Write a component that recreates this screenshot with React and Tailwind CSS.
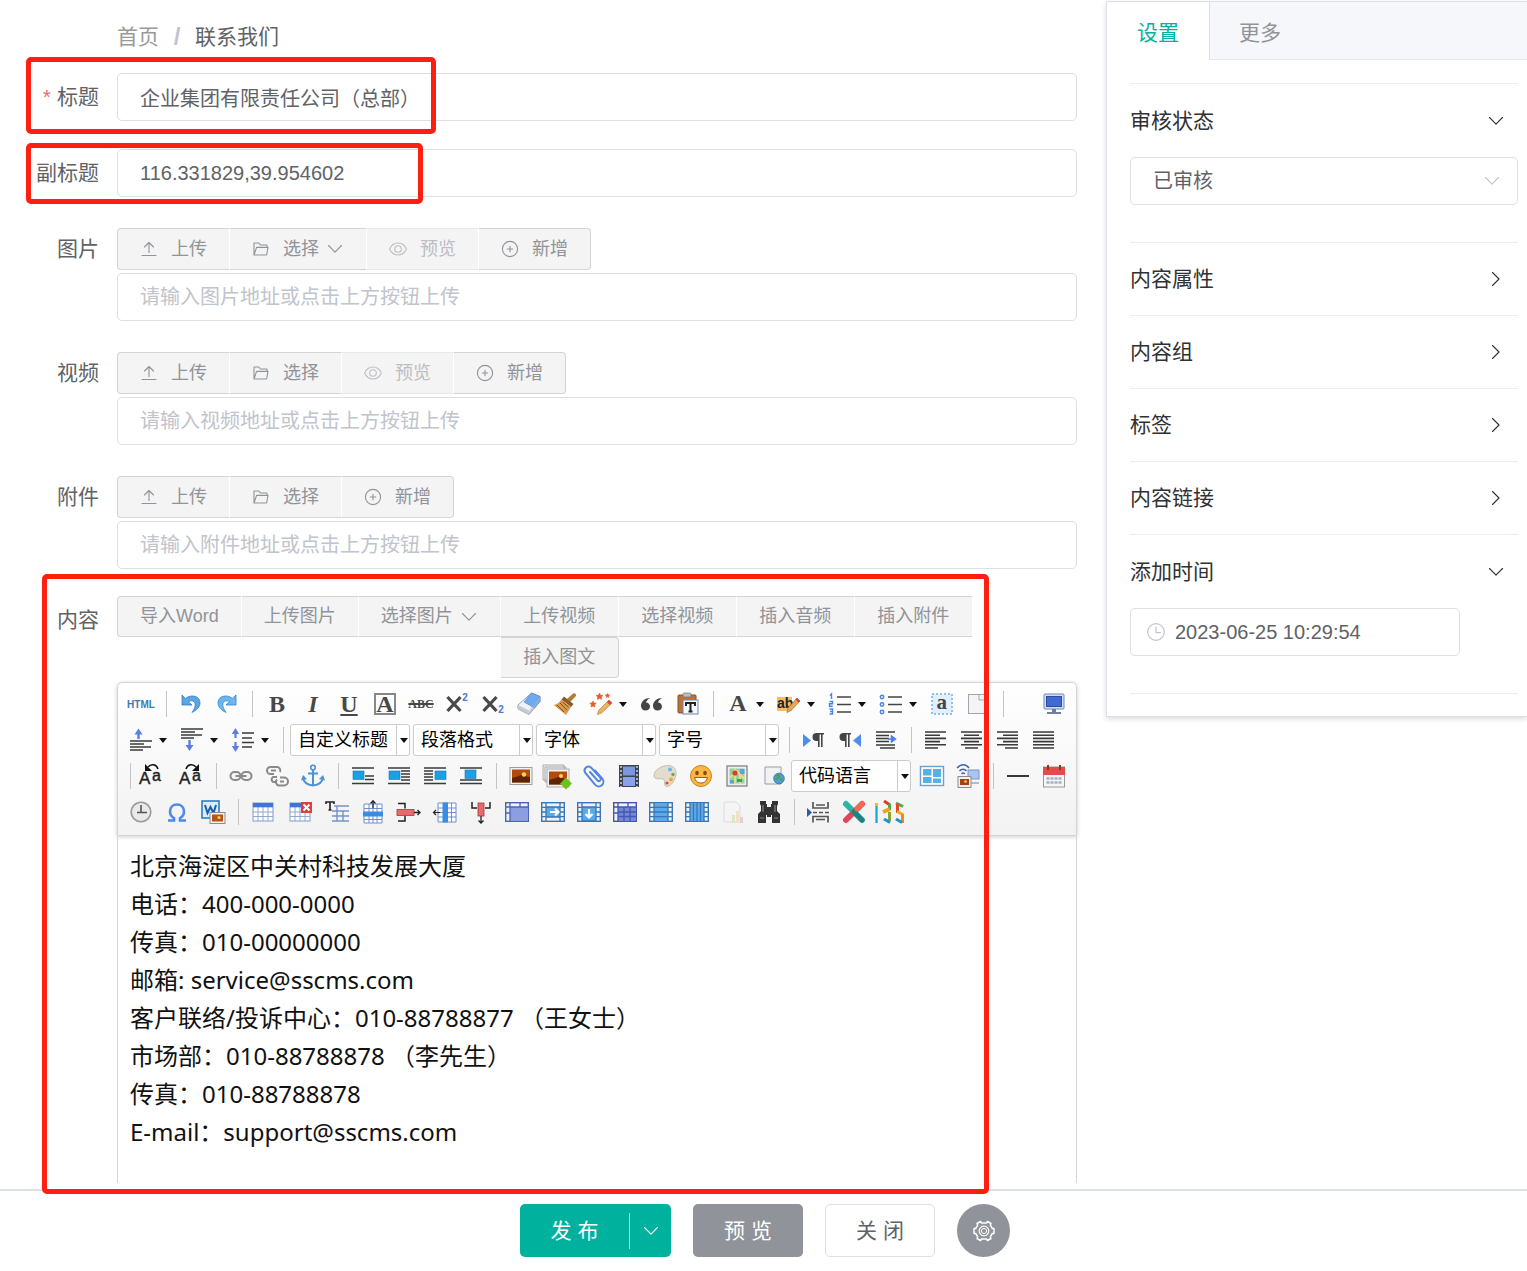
import { useState } from "react";

/* ---------- line icons used by the form ---------- */

function LineIcon({ children, className = "size-[18px]" }) {
  return (
    <svg
      viewBox="0 0 18 18"
      className={`shrink-0 ${className}`}
      fill="none"
      stroke="currentColor"
      strokeWidth="1.1"
      strokeLinecap="round"
      strokeLinejoin="round"
      aria-hidden="true"
    >
      {children}
    </svg>
  );
}

const UploadIcon = () => (
  <LineIcon>
    <path d="M9 12.500V2.500M4.500 7 9 2.500 13.500 7M2 15.500h14" />
  </LineIcon>
);

const FolderIcon = () => (
  <LineIcon>
    <path d="M2 15V3h4.800l1.600 2h6.600v2.400M2 15h12.600L16 7.400H4.600L2 15Z" />
  </LineIcon>
);

const EyeIcon = () => (
  <LineIcon>
    <path d="M.6 9C2.400 5 5.400 3 9 3s6.600 2 8.400 6c-1.800 4-4.800 6-8.400 6S2.400 13 .6 9Z" />
    <circle cx="9" cy="9" r="3.300" />
  </LineIcon>
);

const PlusIcon = () => (
  <LineIcon>
    <circle cx="9" cy="9" r="7.6" />
    <path d="M9 6.3v5.4M6.3 9h5.4" />
  </LineIcon>
);

const ChevronDown = ({ className }) => (
  <LineIcon className={className}>
    <path d="m2.5 5.5 6.5 6.700 6.500-6.700" />
  </LineIcon>
);

const ChevronRight = ({ className }) => (
  <LineIcon className={className}>
    <path d="m5.500 2.500 6.500 6.500-6.500 6.500" />
  </LineIcon>
);

const ClockLineIcon = () => (
  <LineIcon className="size-5">
    <circle cx="9" cy="9" r="7.5" />
    <path d="M9 4.5V9.5h4" />
  </LineIcon>
);

const GearIcon = () => (
  <svg viewBox="0 0 22 22" className="size-[22px]" fill="none" stroke="currentColor" strokeWidth="1.5" strokeLinejoin="round" aria-hidden="true">
    <path d="M7.500 1.500 8.500 3h5l1-1.500 3.500 2-.7 1.700 2 3.300H21v5h-1.700l-2 3.300.7 1.700-3.500 2-1-1.500h-5l-1 1.500-3.500-2 .7-1.700-2-3.300H1v-5h1.700l2-3.300L4 3.500Z" />
    <circle cx="11" cy="11" r="4.800" strokeWidth="1.2" />
    <circle cx="11" cy="11" r="2.600" strokeWidth="1" />
  </svg>
);

/* ---------- editor toolbar icons ---------- */

function Ico({ children }) {
  return (
    <svg viewBox="0 0 24 24" className="size-6 shrink-0 overflow-visible" fill="none" aria-hidden="true">
      {children}
    </svg>
  );
}

const Undo = () => (
  <Ico>
    <path d="M3 3v10h10l-3.600-3.200c3-2 6.600-1 6.800 2.600.1 2.600-1 5-3.200 8 5-2.400 8-5.400 8-9.600C21 4.500 13 1.500 6.500 6.400Z" fill="#5aa5e6" stroke="#2f7fc9" strokeWidth=".8" />
  </Ico>
);

const Redo = () => (
  <Ico>
    <path d="M21 3v10H11l3.600-3.200c-3-2-6.600-1-6.800 2.600-.1 2.600 1 5 3.200 8-5-2.400-8-5.400-8-9.600C3 4.500 11 1.500 17.500 6.400Z" fill="#6db6ef" stroke="#2f86cf" strokeWidth=".8" />
  </Ico>
);

const Eraser = () => (
  <Ico>
    <path d="m14.500 1 8.500 3.500v5L12 22.500 1 17v-4Z" fill="#f1f3f6" stroke="#8b95a5" strokeWidth=".9" />
    <path d="m14.500 1 8.500 3.500v5L17.500 16 7 10Z" fill="#6fa9ef" stroke="#4d83cc" strokeWidth=".6" />
    <path d="M1 13v4l11 5.500v-4Z" fill="#c3cad4" />
    <path d="m23 4.500-11 14v4l11-13Z" fill="#9fb3d0" opacity=".5" />
  </Ico>
);

const Broom = () => (
  <Ico>
    <path d="M22 1.500c1.500.8 1.500 2 .5 3L17 10l-3-3 5.500-5c.8-.8 1.700-1 2.500-.5Z" fill="#b97a35" />
    <path d="m11 4.500 9.500 7.500-2.500 3L8.500 7.500Z" fill="#8a5a2a" />
    <path d="m8.500 7.500 9.500 7.500-5 8L.8 13c3-.5 5.700-2.500 7.700-5.500Z" fill="#d79a4c" />
    <path d="m4 13 7 7M7 11l7 7M9.500 10l6 5" stroke="#7d4f22" strokeWidth="1" />
  </Ico>
);

const Wand = () => (
  <Ico>
    <path d="m20 8 3 3-10.500 10-4 1.500 1-4Z" fill="#e9b45c" stroke="#b9812c" strokeWidth=".7" />
    <path d="m20 8 3 3-2 2-3.200-3Z" fill="#dd4747" />
    <path d="m10.500 1 1 2.200 2.500.3-1.800 1.600.4 2.400-2.100-1.200-2.200 1.200.5-2.400L7 3.500l2.500-.3ZM4 9l1 2 2.300.3-1.700 1.500.4 2.200-2-1.100L2 15l.4-2.200L.8 11.300 3 11ZM18.500 1.500l.7 1.300 1.500.2-1.100 1 .2 1.500-1.300-.7-1.300.7.2-1.500-1.100-1 1.500-.2Z" fill="#e85a28" stroke="#e85a28" strokeWidth=".6" />
  </Ico>
);

const Quote = () => (
  <Ico>
    <path d="M10 6c-5 0-9 3.500-9 8 0 2.700 1.900 4.500 4.500 4.500 2.500 0 4.500-1.700 4.500-4.100 0-2.300-1.700-3.900-4-4C6.700 8.500 8 7.200 10 6ZM22 6c-5 0-9 3.500-9 8 0 2.700 1.900 4.500 4.500 4.500 2.500 0 4.500-1.700 4.500-4.100 0-2.300-1.700-3.900-4-4C18.700 8.500 20 7.200 22 6Z" fill="#444" />
  </Ico>
);

const Paste = () => (
  <Ico>
    <rect x="2" y="3" width="18" height="18" rx="1" fill="#bd7238" stroke="#8d4d1d" />
    <rect x="7" y="1" width="8" height="4" rx="1" fill="#b9bcc2" stroke="#777" strokeWidth=".7" />
    <rect x="7" y="8" width="15" height="14" fill="#f4f7fd" stroke="#6f86b8" />
    <path d="M10 14v-3h9v3M14.500 11v8.500M12.500 19.500h4" stroke="#222" strokeWidth="2" />
  </Ico>
);

const Highlight = () => (
  <Ico>
    <rect x="0" y="5" width="15" height="14" fill="#f8bd62" />
    <text x="0" y="16" fontSize="14" fontWeight="700" fill="#222" fontFamily="Liberation Sans, sans-serif">ab</text>
    <path d="m20 6 3 3-9 9.500-4 2 1-4.500Z" fill="#e6aa53" stroke="#9b6a24" strokeWidth=".7" />
    <path d="m20 6 3 3-1.500 1.500-3-3Z" fill="#dd3c3c" />
  </Ico>
);

const OrderedList = () => (
  <Ico>
    <path d="M9 5h14M9 12.500h14M9 20h14" stroke="#444" strokeWidth="1.6" />
    <path d="M2 3.500 3.500 2v5M1.500 9.500h3v2.300h-3v2.500h3.300M1.500 17h3v5h-3M2 19.500h2.500" stroke="#4b83ec" strokeWidth="1.4" />
  </Ico>
);

const BulletList = () => (
  <Ico>
    <path d="M9 5h14M9 12.500h14M9 20h14" stroke="#444" strokeWidth="1.6" />
    <g stroke="#4b83ec" strokeWidth="1.5">
      <circle cx="3" cy="5" r="1.7" />
      <circle cx="3" cy="12.5" r="1.7" />
      <circle cx="3" cy="20" r="1.7" />
    </g>
  </Ico>
);

const SelectAll = () => (
  <Ico>
    <rect x="2" y="2" width="20" height="20" fill="#e2f0fe" stroke="#8ec2f2" strokeWidth="2" strokeDasharray="2 2" />
    <text x="6.5" y="17" fontSize="21" fontWeight="700" fill="#444" fontFamily="Liberation Serif, serif">a</text>
  </Ico>
);

const NewPage = () => (
  <Ico>
    <rect x="2.5" y="2.5" width="19" height="19" fill="#f4f4f8" stroke="#a3a4ad" />
    <path d="M13 3v5h8" stroke="#a3a4ad" />
  </Ico>
);

const Monitor = () => (
  <Ico>
    <rect x="2" y="2" width="20" height="15" rx="1" fill="#d3def4" stroke="#6e88bb" />
    <rect x="4.5" y="4.5" width="15" height="10" fill="#3f6bd0" stroke="#2c4d9c" />
    <path d="M10 17h4v3h-4ZM5 20h14v2H5Z" fill="#6c7f9e" />
  </Ico>
);

const TextLines = ({ rows }) => (
  <path d={rows.map(([x, y, w]) => `M${x} ${y}h${w}`).join("")} stroke="#3a3a3a" strokeWidth="1.6" />
);

const SpaceBefore = () => (
  <Ico>
    <path d="M9.500 11V5" stroke="#5b7fe0" strokeWidth="2.4" />
    <path d="M5.500 6.500 9.500.5l4 6Z" fill="#5b7fe0" />
    <TextLines rows={[[1, 13, 22], [1, 16, 14], [1, 19, 21], [1, 22, 13]]} />
  </Ico>
);

const SpaceAfter = () => (
  <Ico>
    <TextLines rows={[[1, 1, 22], [1, 4, 14], [1, 7, 21], [1, 10, 13]]} />
    <path d="M9.500 12v6" stroke="#5b7fe0" strokeWidth="2.4" />
    <path d="m5.500 17 4 6 4-6Z" fill="#5b7fe0" />
  </Ico>
);

const LineHeight = () => (
  <Ico>
    <path d="M4.500 10V5M4.500 14v5" stroke="#5b7fe0" strokeWidth="2.2" />
    <path d="m.8 6 3.700-6 3.700 6ZM.8 18l3.700 6 3.700-6Z" fill="#5b7fe0" />
    <TextLines rows={[[11, 5, 12], [11, 10, 10], [11, 14.5, 12], [11, 19, 10]]} />
  </Ico>
);

const Ltr = () => (
  <Ico>
    <path d="m1 6 8 6.500L1 19Z" fill="#4c8df0" />
    <path d="M22 5h-7.500a4 4 0 0 0 0 8H16v6h1.600V6.500H19V19h1.600V6.500H22Z" fill="#444" />
  </Ico>
);

const Rtl = () => (
  <Ico>
    <path d="m23 6-8 6.500 8 6.500Z" fill="#4c8df0" />
    <path d="M13 5H5.500a4 4 0 0 0 0 8H7v6h1.600V6.500H10V19h1.600V6.500H13Z" fill="#444" />
  </Ico>
);

const Indent = () => (
  <Ico>
    <TextLines rows={[[2, 4, 19], [2, 7.5, 13], [2, 10.5, 13], [2, 13.5, 13], [2, 17, 19], [6, 20, 15]]} />
    <path d="M14 11h5M17.500 8l4 3-4 3Z" stroke="#4c7ff0" strokeWidth="1.5" fill="#4c7ff0" />
  </Ico>
);

const ALIGN_ROWS = {
  left: [[1, 4, 21], [1, 7.2, 15], [1, 10.4, 21], [1, 13.6, 15], [1, 16.8, 21], [1, 20, 13]],
  center: [[1, 4, 21], [4, 7.2, 15], [1, 10.4, 21], [4, 13.6, 15], [1, 16.8, 21], [5, 20, 13]],
  right: [[1, 4, 21], [7, 7.2, 15], [1, 10.4, 21], [7, 13.6, 15], [1, 16.8, 21], [9, 20, 13]],
  full: [[1, 4, 21], [1, 7.2, 21], [1, 10.4, 21], [1, 13.6, 21], [1, 16.8, 21], [1, 20, 21]],
};

const Align = ({ to }) => (
  <Ico>
    <TextLines rows={ALIGN_ROWS[to]} />
  </Ico>
);

const CaseLetters = () => (
  <g fontFamily="Liberation Sans, sans-serif" fill="#222" stroke="#222" strokeWidth=".4">
    <text x="0" y="20" fontSize="17">A</text>
    <text x="13" y="17" fontSize="16">a</text>
  </g>
);

const CaseUp = () => (
  <Ico>
    <CaseLetters />
    <path d="M19 5c-1.500-5-7-5.500-10-2" stroke="#111" strokeWidth="1.5" />
    <path d="M6 0v7h7Z" fill="#111" />
  </Ico>
);

const CaseDown = () => (
  <Ico>
    <CaseLetters />
    <path d="M7 5c1.500-5 7-5.500 10-2" stroke="#111" strokeWidth="1.5" />
    <path d="M20 0v7h-7Z" fill="#111" />
  </Ico>
);

const Link = () => (
  <Ico>
    <g stroke="#8a8a8a" strokeWidth="2">
      <rect x="1.5" y="8" width="10" height="8" rx="4" />
      <rect x="12.5" y="8" width="10" height="8" rx="4" />
      <path d="M6.500 12h11" />
    </g>
  </Ico>
);

const Unlink = () => (
  <Ico>
    <g stroke="#8a8a8a" strokeWidth="2">
      <path d="M9 10H5.500a3.500 3.500 0 0 1 0-7H12a3.500 3.500 0 0 1 3 5M6 6.500h5M12 13H8a3 3 0 0 0 0 5h3" />
      <path d="M15 13.500h4a3.500 3.500 0 0 1 0 8h-5a3.500 3.500 0 0 1-2-6M15 17.500h4" />
    </g>
  </Ico>
);

const Anchor = () => (
  <Ico>
    <circle cx="12" cy="3.5" r="2.3" stroke="#4a93d6" strokeWidth="1.6" />
    <path d="M12 6v16M7 9.500h10M2 13c.5 5 4 8 10 8.500 6-.5 9.500-3.500 10-8.500" stroke="#4a93d6" strokeWidth="2" />
    <path d="M0 16.500 2 11l4 4ZM24 16.500 22 11l-4 4Z" fill="#4a93d6" />
  </Ico>
);

// blue picture box with text flowing around it
const FLOAT_SHAPES = {
  none: { box: [2, 7], rows: [[1, 4, 22], [14, 12, 9], [14, 15.5, 9], [1, 19.5, 22]] },
  left: { box: [2, 7], rows: [[1, 4, 22], [14, 7, 9], [14, 10, 9], [14, 13, 9], [14, 16, 9], [1, 19.5, 22]] },
  right: { box: [12, 7], rows: [[1, 4, 22], [1, 7, 9], [1, 10, 9], [1, 13, 9], [1, 16, 9], [1, 19.5, 22]] },
  center: { box: [6, 6], rows: [[1, 4, 22], [1, 16, 22], [1, 19.5, 22]] },
};

const ImageFloat = ({ to }) => {
  const { box, rows } = FLOAT_SHAPES[to];
  return (
    <Ico>
      <TextLines rows={rows} />
      <rect x={box[0]} y={box[1]} width="11" height="8.5" fill="#1c9fe4" stroke="#0f7cc0" strokeWidth=".6" />
    </Ico>
  );
};

const Photo = () => (
  <Ico>
    <rect x="1" y="3.5" width="22" height="17" fill="#f2f2f2" stroke="#9c9c9c" />
    <rect x="3" y="5.5" width="18" height="13" fill="#b44a0c" />
    <path d="M3 14c5-1 8-3 10-3s5 2 8 2v5.500H3Z" fill="#5e2404" />
    <circle cx="15" cy="10.5" r="2.2" fill="#ffd35a" />
  </Ico>
);

const Photos = () => (
  <Ico>
    <path d="M-2 1h21v15H-2ZM0 3h21v15H0Z" fill="#eee" stroke="#999" strokeWidth=".8" />
    <rect x="2" y="5" width="22" height="18" fill="#f2f2f2" stroke="#9c9c9c" strokeWidth=".8" />
    <rect x="4" y="7.5" width="18" height="13" fill="#b44a0c" />
    <path d="M4 16c5-1 8-3 10-3s5 2 8 2v5.500H4Z" fill="#5e2404" />
    <circle cx="16" cy="12" r="2" fill="#ffd35a" />
    <path d="m21 15 4.500 4.500L21 24l-4.500-4.500Z" fill="#6cc21b" stroke="#6cc21b" strokeWidth="2" />
  </Ico>
);

const Clip = () => (
  <Ico>
    <path d="m9 8 7.500 8.500a2 2 0 0 0 3-2.600L10 3.500a4 4 0 0 0-6 5l10 12a4.600 4.600 0 0 0 7.500-5.500L14 6.500" stroke="#5585e0" strokeWidth="2" strokeLinecap="round" />
  </Ico>
);

const Film = () => (
  <Ico>
    <rect x="2" y="1" width="20" height="22" fill="#3e4350" />
    <rect x="6" y="2.5" width="12" height="9" fill="#7b97e0" />
    <rect x="6" y="13" width="12" height="9" fill="#8aa3e8" />
    <path d="M4 2v21M20 2v21" stroke="#c9ccd6" strokeWidth="1.6" strokeDasharray="2 2" />
  </Ico>
);

const Palette = () => (
  <Ico>
    <path d="M15 1.500c5 0 8.500 3 8 8.500C22.500 16 18 22.500 14 22.500c-4.500 0-.5-6-4-7.500-2.500-1-9 1.500-9-3.500C1 6 8.500 1.500 15 1.500Z" fill="#e4dccb" stroke="#b9b2a4" strokeWidth=".8" />
    <circle cx="17" cy="5.5" r="2" fill="#67b6ea" />
    <circle cx="20" cy="10.5" r="1.7" fill="#65b33e" />
    <circle cx="18" cy="15.5" r="1.9" fill="#e8a33b" />
    <circle cx="14" cy="19" r="1.6" fill="#dd4a35" />
  </Ico>
);

const Smile = () => (
  <Ico>
    <circle cx="12" cy="12" r="10.5" fill="#f9b842" stroke="#cf7f1d" />
    <ellipse cx="8" cy="9" rx="1.8" ry="2.2" fill="#8a4a10" />
    <ellipse cx="16" cy="9" rx="1.8" ry="2.2" fill="#8a4a10" />
    <path d="M5.500 13.500h13c-1 4-3.500 5.500-6.500 5.500s-5.500-1.500-6.500-5.500Z" fill="#fff" stroke="#a55a12" />
  </Ico>
);

const MapIcon = () => (
  <Ico>
    <rect x="2" y="2" width="20" height="20" fill="#efefef" stroke="#8b8b8b" strokeWidth="1.4" />
    <rect x="4.5" y="4.5" width="15" height="15" fill="#8fd0b0" />
    <path d="M4.500 14 12 7l7.500 8M10 4.500v15M15 19.500V9" stroke="#f5e46a" strokeWidth="1.7" />
    <path d="M15 5h4.500v5H15ZM5 16h4v3.500H5Z" fill="#5aa4e2" />
    <circle cx="10" cy="9" r="2.6" fill="#dd3d2c" />
    <path d="M12 15h5v3h-5Z" fill="#4f9f35" />
  </Ico>
);

const WebPage = () => (
  <Ico>
    <path d="M4 3h16v17H4Z" fill="#f1f2f5" stroke="#9a9ca3" />
    <circle cx="18" cy="14.5" r="5.3" fill="#4f9fd6" stroke="#2f6f9f" strokeWidth=".8" />
    <path d="M15 11.500c2-1 4 0 3 1.500s-3 1-3 3M19 16l2.500-1" stroke="#4fa04a" strokeWidth="2" />
  </Ico>
);

const Template = () => (
  <Ico>
    <rect x=".5" y="2.5" width="23" height="19" fill="#fff" stroke="#6f9fcb" strokeWidth="1.4" />
    <path d="M3 5h8.500v6.500H3ZM3 13h8.500v6H3ZM13 5h8v8h-8ZM13 14.500h8V19h-8Z" fill="#58b1e3" />
  </Ico>
);

const RemoteImage = () => (
  <Ico>
    <path d="M1 4c4-4.500 9-4.500 12 0M3.500 7c2-2.500 5-2.500 7 0M5.500 10c1-1.200 2.300-1.200 3.300 0" stroke="#3c65b4" strokeWidth="1.5" />
    <rect x="12" y="6" width="11" height="9" fill="#a9c5f6" stroke="#7d93bd" />
    <path d="M14 18h9v2h-9Z" fill="#b4bccb" />
    <rect x="2" y="12.5" width="13" height="11" fill="#f1f1f1" stroke="#8b8b8b" />
    <rect x="4" y="15" width="9" height="6" fill="#a0430f" />
    <circle cx="9.5" cy="17.5" r="1.3" fill="#ffd15a" />
  </Ico>
);

const Rule = () => (
  <Ico>
    <path d="M1 12h22" stroke="#222" strokeWidth="1.8" />
  </Ico>
);

const Calendar = () => (
  <Ico>
    <rect x="1.5" y="3" width="21" height="20" fill="#f5f5f7" stroke="#9a9a9a" />
    <path d="M1 3h22v8H1Z" fill="#e64a4a" />
    <path d="M6 1v5M18 1v5" stroke="#a22a2a" strokeWidth="2" />
    <path d="M4.500 14.500h15M4.500 18.500h15" stroke="#a5afc0" strokeWidth="2.5" strokeDasharray="3 1" />
  </Ico>
);

const Clock = () => (
  <Ico>
    <circle cx="12" cy="12" r="9.8" fill="#e9e9e9" stroke="#9a9a9a" strokeWidth="1.6" />
    <path d="M12 5v7.500h6M12 12.500H8" stroke="#555" strokeWidth="1.6" />
  </Ico>
);

const Omega = () => (
  <Ico>
    <path d="M3 20.500h6v-2.300c-3-1.700-4-4-4-6.600C5 7 8 4.500 12 4.500s7 2.500 7 7.100c0 2.600-1 4.900-4 6.600v2.300h6" stroke="#5088ee" strokeWidth="2.6" />
  </Ico>
);

const WordImage = () => (
  <Ico>
    <rect x="1" y="1" width="17" height="17" fill="#dcebfa" stroke="#2e7cc4" strokeWidth="1.6" />
    <path d="m4 5 2.500 8L9.500 7l3 6L15 5" stroke="#1b5ea8" strokeWidth="2" />
    <rect x="9" y="12.5" width="15" height="11" fill="#f3f3f3" stroke="#8b8b8b" />
    <rect x="11" y="14.5" width="11" height="7" fill="#b3541a" />
    <circle cx="18" cy="17.5" r="1.6" fill="#ffd15a" />
  </Ico>
);

const Grid = ({ x = 2, y = 3, w = 20, h = 18 }) => (
  <g>
    <rect x={x} y={y} width={w} height={h} fill="#fff" stroke="#7f9bc8" />
    <path
      d={`M${x} ${y + h * 0.5}h${w}M${x} ${y + h * 0.75}h${w}M${x + w / 4} ${y}v${h}M${x + w / 2} ${y}v${h}M${x + w * 0.75} ${y}v${h}`}
      stroke="#8fa8d2"
    />
    <rect x={x} y={y} width={w} height={h * 0.24} fill="#3f74d8" />
  </g>
);

const TableIcon = () => (
  <Ico>
    <Grid />
  </Ico>
);

const TableDelete = () => (
  <Ico>
    <Grid />
    <rect x="13" y="2" width="11" height="11" fill="#e23c3c" />
    <path d="m15.500 4.500 6 6m0-6-6 6" stroke="#fff" strokeWidth="2" />
  </Ico>
);

const TableCaption = () => (
  <Ico>
    <path d="M1 4V2h8v2M5 2v8M3.500 10h3" stroke="#222" strokeWidth="1.6" />
    <path d="M9 6h15M7 11h17M7 16h17M7 21h17M12 6v15M18 11v10" stroke="#7593c8" strokeWidth="1.4" />
  </Ico>
);

const RowInsert = () => (
  <Ico>
    <path d="M3 4h18v19H3ZM3 8.500h18M3 19.500h18M8 4v19M12 4v19M16 4v19" fill="#fff" stroke="#6f90ca" />
    <rect x="2" y="11.5" width="20" height="5" fill="#3a8be4" />
    <path d="M12 8V0M9.500 3.500 12 .8l2.500 2.700" stroke="#222" strokeWidth="1.2" />
  </Ico>
);

const RowDelete = () => (
  <Ico>
    <path d="M1 3.500h7v5M1 21h7v-5" stroke="#222" strokeWidth="1.5" />
    <rect x="0" y="9.5" width="17" height="6" fill="#e66b6b" stroke="#a83838" strokeWidth=".8" />
    <path d="M17 12.500h6M20.500 10l2.500 2.500-2.500 2.500" stroke="#222" strokeWidth="1.3" />
  </Ico>
);

const ColInsert = () => (
  <Ico>
    <path d="M5 3h18v19H5ZM5 8h18M5 12.500h18M5 17h18M18.500 3v19" fill="#fff" stroke="#6f90ca" />
    <rect x="9.5" y="2.5" width="5.5" height="20" fill="#3a8be4" />
    <path d="M7 12.500H0M3 10 .5 12.500 3 15" stroke="#222" strokeWidth="1.2" />
  </Ico>
);

const ColDelete = () => (
  <Ico>
    <path d="M3 2v6h5M21 2v6h-5" stroke="#222" strokeWidth="1.5" />
    <rect x="9" y="3" width="6" height="13" fill="#e66b6b" stroke="#a83838" strokeWidth=".8" />
    <path d="M12 16v7M9.500 20.500 12 23l2.500-2.500" stroke="#222" strokeWidth="1.3" />
  </Ico>
);

// white table with a blue block; `lines` are its dark rules, `sign` a white arrow
const Cells = ({ block, tone, edge, lines, sign }) => (
  <Ico>
    <rect x=".7" y="2.7" width="22.6" height="18.6" fill="#eef3fb" stroke={edge} strokeWidth="1.4" />
    <rect x={block[0]} y={block[1]} width={block[2]} height={block[3]} fill={tone} />
    <path d={lines} stroke={edge} strokeWidth="1.3" />
    {sign && <path d={sign} stroke="#fff" strokeWidth="2.2" />}
  </Ico>
);

const SIDES = "M5 3v18M19 3v18M1 7.300h4M1 12h4M1 16.700h4M19 7.300h4M19 12h4M19 16.700h4";

const CELL_DRAWINGS = [
  {
    title: "合并单元格", tone: "#8c9de2", edge: "#4a64b4", block: [5, 7, 18, 14],
    lines: "M1 7h22M5 3v18M15 3v4M1 13h4",
  },
  {
    title: "右合并单元格", tone: "#5aa9e8", edge: "#3a76b4", block: [5, 7, 14, 10],
    lines: `${SIDES}M5 7h14M5 17h14`, sign: "M9 12h8M14 8.500l3.500 3.500-3.500 3.500",
  },
  {
    title: "下合并单元格", tone: "#5aa9e8", edge: "#3a76b4", block: [5, 7, 14, 14],
    lines: `${SIDES}M5 7h14M5 21h14`, sign: "M12 9v8M8.500 14l3.500 3.500 3.500-3.500",
  },
  {
    title: "完全拆分单元格", tone: "#7488da", edge: "#4557a8", block: [5, 7, 18, 14],
    lines: "M1 7h22M5 3v18M15 3v4M11 7v14M17 7v14M5 12h18M5 16.500h18M1 13h4",
  },
  {
    title: "拆分成行", tone: "#5aa9e8", edge: "#3a76b4", block: [5, 3, 14, 18],
    lines: `${SIDES}M5 7.300h14M5 12h14M5 16.700h14`,
  },
  {
    title: "拆分成列", tone: "#5aa9e8", edge: "#3a76b4", block: [5, 3, 14, 18],
    lines: `${SIDES}M8.500 3v18M12 3v18M15.500 3v18`,
  },
];

const Chart = () => (
  <Ico>
    <g opacity=".4">
      <path d="M3 2h12l4 4v16H3Z" fill="#f5f5f5" stroke="#bbb" />
      <path d="M11 15h3v8h-3Z" fill="#b5d68d" />
      <path d="M15 11h3v12h-3Z" fill="#e7c987" />
      <path d="M19 17h3v6h-3Z" fill="#d69797" />
    </g>
  </Ico>
);

const Binoculars = () => (
  <Ico>
    <path d="M3 1h6v3h1v3h4V4h1V1h6v3l-1 2v5l3 3v9h-8v-8h-1v2h-4v-2H9v8H1v-9l3-3V6L3 4Z" fill="#333" />
    <path d="M6 5v7M18 5v7M3 18h4M17 18h4" stroke="#888" strokeWidth="1.2" />
  </Ico>
);

const PageBreak = () => (
  <Ico>
    <path d="m0 8 5 4.500L0 17Z" fill="#2858c0" />
    <path d="M6 2v6h15V2M9 5h9M6 12.500h4m2 0h4m2 0h4M6 22.500v-6h15v6M9 19.500h9" stroke="#555" strokeWidth="1.7" />
  </Ico>
);

const CrossLogo = () => (
  <Ico>
    <path d="m3 4 16 16" stroke="#2fb5a8" strokeWidth="6" strokeLinecap="round" />
    <path d="M19 4 3 20" stroke="#e4455c" strokeWidth="6" strokeLinecap="round" />
    <path d="m11 12 8 8" stroke="#247f80" strokeWidth="5" strokeLinecap="round" />
    <path d="m19 4-5 5" stroke="#ef6c4c" strokeWidth="5" strokeLinecap="round" />
  </Ico>
);

const Logo135 = () => (
  <svg viewBox="0 0 32 24" className="h-6 w-8 shrink-0" fill="none" aria-hidden="true">
    <path d="M1.500 3v20" stroke="#1aa0dd" strokeWidth="2.2" />
    <path d="M1.500 3v3" stroke="#f0c41b" strokeWidth="2.2" />
    <path d="m9 1 6 4" stroke="#dc3b22" strokeWidth="3" />
    <path d="M14.500 4v6" stroke="#49a942" strokeWidth="3" />
    <path d="m8 12 7-3" stroke="#f0a41b" strokeWidth="4" />
    <path d="M14.500 12v9" stroke="#8aa62c" strokeWidth="3" />
    <path d="m9 19 6 3.500" stroke="#1b93d0" strokeWidth="3" />
    <path d="m21 3 7 3.500" stroke="#4bad3b" strokeWidth="3" />
    <path d="M22.500 4v9" stroke="#e04a24" strokeWidth="3" />
    <path d="m22 11.500 6 3" stroke="#f4a91d" strokeWidth="3" />
    <path d="M27.500 14v9" stroke="#f08a1d" strokeWidth="3" />
    <path d="m21 19 6 3.500" stroke="#1b93d0" strokeWidth="3" />
  </svg>
);

const Letter = ({ className = "", children }) => (
  <span className={`font-['Liberation_Serif',serif] text-[24px] leading-6 font-bold text-[#484848] ${className}`}>{children}</span>
);

const Script = ({ up }) => (
  <span className="flex h-6 items-center font-['Liberation_Sans',sans-serif] font-bold">
    <svg viewBox="0 0 16 24" className="h-6 w-4" aria-hidden="true">
      <path d="m1.500 5 13 14M14.500 5l-13 14" stroke="#484848" strokeWidth="3.2" />
    </svg>
    <span className={up ? "self-start text-[10px] leading-3 text-[#4378e0]" : "self-end text-[10px] leading-3 text-[#4378e0]"}>2</span>
  </span>
);

/* ---------- toolbar pieces ---------- */

function Caret() {
  return (
    <svg viewBox="0 0 8 5" className="h-[5px] w-2" aria-hidden="true">
      <path d="M0 0h8L4 5Z" fill="#111" />
    </svg>
  );
}

function Tool({ title, children, split, className = "w-9" }) {
  if (split) {
    return (
      <button type="button" title={title} className="flex h-9 w-[51px] shrink-0 items-center gap-[6px] pl-[6px]">
        {children}
        <Caret />
      </button>
    );
  }
  return (
    <button type="button" title={title} className={`flex h-9 shrink-0 items-center justify-center ${className}`}>
      {children}
    </button>
  );
}

function Sep() {
  return (
    <span className="flex w-[14px] shrink-0 justify-center">
      <span className="h-[26px] w-px bg-[#c4c4c8]" />
    </span>
  );
}

function Combo({ label }) {
  return (
    <span className="relative mr-[3px] h-8 w-[120px] shrink-0">
      <select
        aria-label={label}
        className="h-8 w-full appearance-none rounded-[3px] border border-[#ccc] bg-white pl-[7px] text-[18px] leading-6 text-black outline-none"
      >
        <option>{label}</option>
      </select>
      <span className="pointer-events-none absolute inset-y-0 right-0 flex w-[14px] items-center justify-center border-l border-[#ccc]">
        <Caret />
      </span>
    </span>
  );
}

function Toolbar() {
  return (
    <div className="rounded-t-[5px] border border-[#d4d4d4] bg-linear-to-b from-white to-[#f2f2f2] px-[5px] pt-[3px] pb-[5px] shadow-[0_1px_4px_rgba(0,0,0,0.2)]">
      <div className="flex items-center">
        <Tool title="源代码">
          <span className="font-['Liberation_Sans',sans-serif] text-[10px] font-bold text-[#3a7ab5]">HTML</span>
        </Tool>
        <Sep />
        <Tool title="撤销"><Undo /></Tool>
        <Tool title="重做"><Redo /></Tool>
        <Sep />
        <Tool title="加粗"><Letter>B</Letter></Tool>
        <Tool title="斜体"><Letter className="italic">I</Letter></Tool>
        <Tool title="下划线"><Letter className="underline decoration-2 underline-offset-2">U</Letter></Tool>
        <Tool title="字符边框">
          <span className="flex size-[22px] items-center justify-center border-2 border-[#888]"><Letter>A</Letter></span>
        </Tool>
        <Tool title="删除线">
          <span className="font-['Liberation_Serif',serif] text-[12px] leading-6 font-bold text-[#484848] line-through decoration-2">ABC</span>
        </Tool>
        <Tool title="上标"><Script up /></Tool>
        <Tool title="下标"><Script /></Tool>
        <Tool title="清除格式"><Eraser /></Tool>
        <Tool title="格式刷"><Broom /></Tool>
        <Tool title="自动排版" split><Wand /></Tool>
        <Tool title="引用"><Quote /></Tool>
        <Tool title="纯文本粘贴"><Paste /></Tool>
        <Sep />
        <Tool title="字体颜色" split><span className="w-6 text-center"><Letter>A</Letter></span></Tool>
        <Tool title="背景色" split><Highlight /></Tool>
        <Tool title="有序列表" split><OrderedList /></Tool>
        <Tool title="无序列表" split><BulletList /></Tool>
        <Tool title="全选"><SelectAll /></Tool>
        <Tool title="清空文档"><NewPage /></Tool>
        <Sep />
        <Tool title="全屏" className="ml-[26px] w-9"><Monitor /></Tool>
      </div>

      <div className="flex items-center">
        <Tool title="段前距" split><SpaceBefore /></Tool>
        <Tool title="段后距" split><SpaceAfter /></Tool>
        <Tool title="行间距" split><LineHeight /></Tool>
        <Sep />
        <Combo label="自定义标题" />
        <Combo label="段落格式" />
        <Combo label="字体" />
        <Combo label="字号" />
        <Sep />
        <Tool title="从左向右输入"><Ltr /></Tool>
        <Tool title="从右向左输入"><Rtl /></Tool>
        <Tool title="首行缩进"><Indent /></Tool>
        <Sep />
        <Tool title="居左对齐"><Align to="left" /></Tool>
        <Tool title="居中对齐"><Align to="center" /></Tool>
        <Tool title="居右对齐"><Align to="right" /></Tool>
        <Tool title="两端对齐"><Align to="full" /></Tool>
      </div>

      <div className="flex items-center">
        <Sep />
        <Tool title="字母大写" className="w-7"><CaseUp /></Tool>
        <Tool title="字母小写" className="ml-2 w-9"><CaseDown /></Tool>
        <Sep />
        <Tool title="超链接"><Link /></Tool>
        <Tool title="取消链接"><Unlink /></Tool>
        <Tool title="锚点"><Anchor /></Tool>
        <Sep />
        <Tool title="默认"><ImageFloat to="none" /></Tool>
        <Tool title="左浮动"><ImageFloat to="left" /></Tool>
        <Tool title="右浮动"><ImageFloat to="right" /></Tool>
        <Tool title="居中"><ImageFloat to="center" /></Tool>
        <Sep />
        <Tool title="单图上传"><Photo /></Tool>
        <Tool title="多图上传"><Photos /></Tool>
        <Tool title="附件"><Clip /></Tool>
        <Tool title="视频"><Film /></Tool>
        <Tool title="涂鸦"><Palette /></Tool>
        <Tool title="表情"><Smile /></Tool>
        <Tool title="地图"><MapIcon /></Tool>
        <Tool title="插入Iframe"><WebPage /></Tool>
        <Combo label="代码语言" />
        <Tool title="模板"><Template /></Tool>
        <Tool title="图片转存"><RemoteImage /></Tool>
        <Sep />
        <Tool title="分隔线"><Rule /></Tool>
        <Tool title="日期"><Calendar /></Tool>
      </div>

      <div className="flex items-center">
        <Tool title="时间"><Clock /></Tool>
        <Tool title="特殊字符"><Omega /></Tool>
        <Tool title="Word图片"><WordImage /></Tool>
        <Sep />
        <Tool title="插入表格"><TableIcon /></Tool>
        <Tool title="删除表格" className="w-[38px]"><TableDelete /></Tool>
        <Tool title="表格标题"><TableCaption /></Tool>
        <Tool title="插入行"><RowInsert /></Tool>
        <Tool title="删除行"><RowDelete /></Tool>
        <Tool title="插入列"><ColInsert /></Tool>
        <Tool title="删除列"><ColDelete /></Tool>
        {CELL_DRAWINGS.map(({ title, ...drawing }) => (
          <Tool key={title} title={title}><Cells {...drawing} /></Tool>
        ))}
        <Tool title="图表"><Chart /></Tool>
        <Tool title="查询替换"><Binoculars /></Tool>
        <Sep />
        <Tool title="分页"><PageBreak /></Tool>
        <Tool title="编辑器"><CrossLogo /></Tool>
        <Tool title="135编辑器"><Logo135 /></Tool>
      </div>
    </div>
  );
}

/* ---------- form ---------- */

function Marker({ className }) {
  return <div aria-hidden="true" className={`pointer-events-none absolute z-10 rounded-[5px] border-[5px] border-[#ff1f10] ${className}`} />;
}

function Row({ label, htmlFor, required, tall, className = "", children }) {
  return (
    <div className={`relative flex gap-[18px] ${className}`}>
      <label
        htmlFor={htmlFor}
        className={`flex w-[99px] shrink-0 items-center justify-end text-[21px] text-[#606266] ${tall ? "h-12" : "h-[42px]"}`}
      >
        {required && <span className="mr-[6px] text-[#f56c6c]">*</span>}
        {label}
      </label>
      {children}
    </div>
  );
}

const INPUT =
  "block h-12 w-full min-w-0 rounded-[5px] border border-[#dcdfe6] bg-white px-[22px] text-[#606266] outline-none placeholder:text-[#c0c4cc]";

const ICONS = { upload: UploadIcon, select: FolderIcon, preview: EyeIcon, add: PlusIcon };
const NAMES = { upload: "上传", select: "选择", preview: "预览", add: "新增" };

function GroupButton({ children, disabled, className = "" }) {
  return (
    <button
      type="button"
      disabled={disabled}
      className={`flex shrink-0 items-center justify-center border-y border-r bg-[#f4f4f4] px-[22px] text-[18px] whitespace-nowrap ${
        disabled ? "border-y-[#e9e9eb] text-[#bcbec2]" : "border-y-[#d3d4d6] text-[#909399]"
      } ${className}`}
    >
      {children}
    </button>
  );
}

function MediaField({ id, label, kinds, dropdown, className }) {
  return (
    <Row label={label} htmlFor={id} className={className}>
      <div className="flex min-w-0 flex-1 flex-col gap-[3px]">
        <div className="flex">
          {kinds.map((kind, i) => {
            const Icon = ICONS[kind];
            const first = i === 0;
            const last = i === kinds.length - 1;
            return (
              <GroupButton
                key={kind}
                disabled={kind === "preview"}
                className={`h-[42px] gap-[13px] ${first ? "rounded-l-[4px] border-l border-l-[#d3d4d6]" : ""} ${
                  last ? "rounded-r-[4px] border-r-[#d3d4d6]" : "border-r-white"
                }`}
              >
                <Icon />
                <span className="flex items-center gap-[7px]">
                  {NAMES[kind]}
                  {dropdown && kind === "select" && <ChevronDown />}
                </span>
              </GroupButton>
            );
          })}
        </div>
        <input id={id} type="text" placeholder={`请输入${label}地址或点击上方按钮上传`} className={`${INPUT} text-[20px]`} />
      </div>
    </Row>
  );
}

const BODY = [
  "北京海淀区中关村科技发展大厦",
  "电话：400-000-0000",
  "传真：010-00000000",
  "邮箱: service@sscms.com",
  "客户联络/投诉中心：010-88788877 （王女士）",
  "市场部：010-88788878 （李先生）",
  "传真：010-88788878",
  "E-mail：support@sscms.com",
];

function ContentEditor() {
  return (
    <Row label="内容" tall className="flex-1">
      <Marker className="-top-[22px] -bottom-[11px] left-[42px] w-[947px]" />
      <div className="flex min-w-0 flex-1 flex-col">
        <div className="mb-1 flex items-start">
          <GroupButton className="h-[41px] rounded-l-[4px] border-l border-r-white border-l-[#d3d4d6]">导入Word</GroupButton>
          <GroupButton className="h-[41px] border-r-white">上传图片</GroupButton>
          <GroupButton className="h-[41px] gap-[7px] border-r-white">
            选择图片
            <ChevronDown />
          </GroupButton>
          <div className="flex w-[472px] flex-wrap">
            {["上传视频", "选择视频", "插入音频", "插入附件"].map((name) => (
              <GroupButton key={name} className="h-[41px] w-[118px] border-r-white">{name}</GroupButton>
            ))}
            <GroupButton className="h-[41px] w-[118px] rounded-r-[4px] border-r-[#d3d4d6]">插入图文</GroupButton>
          </div>
        </div>
        <Toolbar />
        <div
          contentEditable
          suppressContentEditableWarning
          role="textbox"
          aria-label="内容"
          className="flex-1 border-x border-[#d4d4d4] px-3 pt-[11px] font-['Noto_Sans','Noto_Sans_CJK_SC',sans-serif] text-[24px] leading-[38px] text-[#111] outline-none"
        >
          {BODY.map((line) => (
            <p key={line}>{line}</p>
          ))}
        </div>
      </div>
    </Row>
  );
}

/* ---------- settings panel ---------- */

function Section({ title, open, onToggle, children }) {
  return (
    <section className="border-b border-[#ebeef5]">
      <button
        type="button"
        aria-expanded={open}
        onClick={onToggle}
        className={`flex w-full items-center justify-between pr-[13px] text-[21px] text-[#303133] ${open ? "h-[73px]" : "h-[72px]"}`}
      >
        {title}
        {open ? <ChevronDown /> : <ChevronRight />}
      </button>
      {open && children && <div className="pb-[37px]">{children}</div>}
    </section>
  );
}

function SettingsPanel() {
  const [open, setOpen] = useState({ 审核状态: true, 添加时间: true });
  const bind = (title) => ({
    title,
    open: !!open[title],
    onToggle: () => setOpen({ ...open, [title]: !open[title] }),
  });

  return (
    <aside className="mt-px w-[421px] shrink-0 self-start border-y border-l border-[#dcdfe6] bg-white shadow-[0_2px_5px_rgba(0,0,0,0.14)]">
      <div role="tablist" className="flex h-[58px] bg-[#f5f7fa] text-[21px]">
        <button type="button" role="tab" aria-selected="true" className="border-r border-[#dcdfe6] bg-white px-[30px] pt-1 text-[#00b19d]">
          设置
        </button>
        <button type="button" role="tab" aria-selected="false" className="flex-1 border-b border-[#e4e7ed] px-[29px] pt-1 text-left text-[#909399]">
          更多
        </button>
      </div>
      <div className="pt-[23px] pr-[9px] pb-[22px] pl-[23px]">
        <div className="border-t border-[#ebeef5]">
          <Section {...bind("审核状态")}>
            <div className="relative">
              <select aria-label="审核状态" className={`${INPUT} appearance-none text-[20px]`}>
                <option>已审核</option>
              </select>
              <span className="pointer-events-none absolute inset-y-0 right-[17px] flex items-center text-[#c0c4cc]">
                <ChevronDown />
              </span>
            </div>
          </Section>
          <Section {...bind("内容属性")} />
          <Section {...bind("内容组")} />
          <Section {...bind("标签")} />
          <Section {...bind("内容链接")} />
          <Section {...bind("添加时间")}>
            <label className="flex h-12 w-[330px] items-center gap-[9px] rounded-[5px] border border-[#dcdfe6] px-[15px] text-[#c0c4cc]">
              <ClockLineIcon />
              <input
                type="text"
                aria-label="添加时间"
                defaultValue="2023-06-25 10:29:54"
                className="min-w-0 flex-1 text-[20px] text-[#606266] outline-none"
              />
            </label>
          </Section>
        </div>
      </div>
    </aside>
  );
}

export default function App() {
  return (
    <div className="flex min-h-screen flex-col bg-white font-['Liberation_Sans','Noto_Sans_CJK_SC',sans-serif]">
      <div className="flex flex-1">
        <main className="flex min-w-0 flex-1 flex-col pr-[29px] pb-[6px]">
          <nav className="flex h-[73px] items-center gap-[14px] pl-[117px] text-[21px]">
            <a href="#home" className="text-[#999]">首页</a>
            <span className="w-2 text-center text-[24px] font-bold text-[#c0c4cc]">/</span>
            <span className="text-[#606266]">联系我们</span>
          </nav>

          <Row label="标题" htmlFor="title" required tall className="mb-7">
            <input id="title" type="text" defaultValue="企业集团有限责任公司（总部）" className={`${INPUT} text-[20px]`} />
            <Marker className="-top-4 left-[26px] h-[77px] w-[410px]" />
          </Row>
          <Row label="副标题" htmlFor="subtitle" tall className="mb-[31px]">
            <input id="subtitle" type="text" defaultValue="116.331829,39.954602" className={`${INPUT} text-[20px]`} />
            <Marker className="-top-[6px] left-[26px] h-[61px] w-[397px]" />
          </Row>

          <MediaField id="image" label="图片" kinds={["upload", "select", "preview", "add"]} dropdown className="mb-[31px]" />
          <MediaField id="video" label="视频" kinds={["upload", "select", "preview", "add"]} className="mb-[31px]" />
          <MediaField id="file" label="附件" kinds={["upload", "select", "add"]} className="mb-[27px]" />
          <ContentEditor />
        </main>

        <SettingsPanel />
      </div>

      <footer className="flex items-center justify-center gap-[22px] border-t-2 border-[#dcdfe6] pt-[13px] pb-[14px] pl-[3px] text-[21px]">
        <div className="flex h-[53px] items-center rounded-[5px] bg-[#00b19d] text-white">
          <button type="button" className="h-full w-[109px]">发 布</button>
          <span className="h-9 w-px bg-white/60" />
          <button type="button" aria-label="更多发布选项" className="flex h-full w-[41px] items-center justify-center">
            <ChevronDown />
          </button>
        </div>
        <button type="button" className="h-[53px] w-[110px] rounded-[5px] bg-[#909399] text-white">预 览</button>
        <button type="button" className="h-[53px] w-[110px] rounded-[5px] border border-[#dcdfe6] bg-white text-[#606266]">关 闭</button>
        <button type="button" aria-label="设置" className="flex size-[53px] items-center justify-center rounded-full bg-[#909399] text-white">
          <GearIcon />
        </button>
      </footer>
    </div>
  );
}
